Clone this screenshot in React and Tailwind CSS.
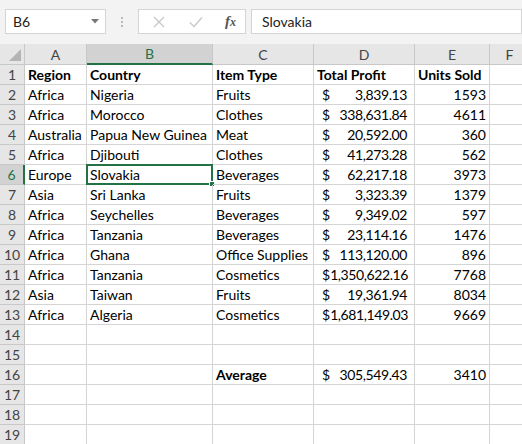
import React from "react";

const cols = [
  { key: "A", w: 62 },
  { key: "B", w: 126 },
  { key: "C", w: 101 },
  { key: "D", w: 101 },
  { key: "E", w: 75 },
  { key: "F", w: 40 },
];

const data = [
  ["Africa", "Nigeria", "Fruits", "3,839.13", "1593"],
  ["Africa", "Morocco", "Clothes", "338,631.84", "4611"],
  ["Australia", "Papua New Guinea", "Meat", "20,592.00", "360"],
  ["Africa", "Djibouti", "Clothes", "41,273.28", "562"],
  ["Europe", "Slovakia", "Beverages", "62,217.18", "3973"],
  ["Asia", "Sri Lanka", "Fruits", "3,323.39", "1379"],
  ["Africa", "Seychelles", "Beverages", "9,349.02", "597"],
  ["Africa", "Tanzania", "Beverages", "23,114.16", "1476"],
  ["Africa", "Ghana", "Office Supplies", "113,120.00", "896"],
  ["Africa", "Tanzania", "Cosmetics", "1,350,622.16", "7768"],
  ["Asia", "Taiwan", "Fruits", "19,361.94", "8034"],
  ["Africa", "Algeria", "Cosmetics", "1,681,149.03", "9669"],
];

function buildRows() {
  const rows = [];
  rows.push({ cells: ["Region", "Country", "Item Type", null, "Units Sold"], bold: true, header: true });
  data.forEach((d) => rows.push({ cells: d }));
  rows.push({ cells: [] });
  rows.push({ cells: [] });
  rows.push({ cells: ["", "", "Average", "305,549.43", "3410"], avg: true });
  rows.push({ cells: [] });
  rows.push({ cells: [] });
  rows.push({ cells: [] });
  return rows;
}

function Cell({ row, col, rowIdx }) {
  const base = "h-[20px] border-r border-b border-[#d4d4d4] flex items-center overflow-visible whitespace-nowrap";
  const selected = rowIdx === 6 && col === 1;
  const v = row.cells[col];
  let content = null;

  if (row.header && col === 3) {
    content = <span className="pl-[3px] font-bold">Total Profit</span>;
  } else if (col === 3 && v) {
    content = (
      <div className="flex w-full justify-between pl-[8px] pr-[7px]">
        <span>$</span>
        <span className="tracking-[-0.4px]">{v}</span>
      </div>
    );
  } else if (col === 4 && v) {
    content = (
      <span className={"w-full pr-[3px] " + (row.bold ? "pl-[3px] text-left font-bold" : "text-right")}>{v}</span>
    );
  } else if (v) {
    content = <span className={"pl-[3px] " + (row.bold || (row.avg && col === 2) ? "font-bold" : "")}>{v}</span>;
  }

  return (
    <div className={base + " relative"}>
      {content}
      {selected && (
        <div className="absolute left-[-1px] top-[-1px] right-[-1px] bottom-[-1px] border-2 border-[#217346] pointer-events-none">
          <div className="absolute right-[-4px] bottom-[-4px] w-[6px] h-[6px] bg-[#217346] border border-white" />
        </div>
      )}
    </div>
  );
}

export default function App() {
  const rows = buildRows();
  const template = "25px " + cols.map((c) => c.w + "px").join(" ");

  return (
    <div
      className="w-[522px] h-[444px] overflow-hidden bg-white text-[14px] text-black"
      style={{ fontFamily: "Lato, 'Open Sans', sans-serif" }}
    >
      {/* formula bar */}
      <div className="h-[44px] bg-[#f3f3f3] flex items-start pt-[9px] pl-[5px]">
        <div className="w-[101px] h-[25px] bg-white border border-[#d4d4d4] flex items-center justify-between pl-[7px] pr-[6px] text-[14px] text-[#222]">
          <span>B6</span>
          <svg width="8" height="5" viewBox="0 0 8 5"><path d="M0 0h8L4 4.5z" fill="#777" /></svg>
        </div>
        <div className="w-[32px] h-[25px] flex flex-col items-center justify-center gap-[2px]">
          <div className="w-[2px] h-[2px] bg-[#b8b8b8]" />
          <div className="w-[2px] h-[2px] bg-[#b8b8b8]" />
          <div className="w-[2px] h-[2px] bg-[#b8b8b8]" />
        </div>
        <div className="w-[108px] h-[25px] bg-white border border-[#d4d4d4] flex items-center pl-[14px]">
          <svg width="12" height="12" viewBox="0 0 12 12">
            <path d="M1 1L11 11M11 1L1 11" stroke="#c8c8c8" strokeWidth="1.4" />
          </svg>
          <svg className="ml-[24px]" width="14" height="12" viewBox="0 0 14 12">
            <path d="M1 6.5L5 10.5L13 1.5" stroke="#c8c8c8" strokeWidth="1.4" fill="none" />
          </svg>
          <span
            className="ml-[22px] text-[15px] italic font-bold text-[#555]"
            style={{ fontFamily: "'Liberation Serif', serif" }}
          >
            f<span className="text-[12px]">x</span>
          </span>
        </div>
        <div className="ml-[5px] flex-1 h-[25px] bg-white border border-[#d4d4d4] flex items-center pl-[10px] text-[14px] text-[#222]">
          Slovakia
        </div>
      </div>

      {/* grid */}
      <div className="grid" style={{ gridTemplateColumns: template }}>
        {/* column headers */}
        <div className="h-[21px] bg-[#e6e6e6] border-r border-b border-[#c8c8c8] relative overflow-hidden">
          <svg className="absolute right-[3px] bottom-[3px]" width="12" height="12" viewBox="0 0 12 12">
            <path d="M12 0V12H0z" fill="#b4b4b4" />
          </svg>
        </div>
        {cols.map((c, i) => (
          <div
            key={c.key}
            className={
              "h-[21px] flex items-center justify-center text-[14px] border-r border-[#c8c8c8] " +
              (i === 1
                ? "bg-[#d2d2d2] text-[#217346] border-b-2 border-b-[#217346]"
                : "bg-[#e6e6e6] text-[#444] border-b border-b-[#c8c8c8]")
            }
          >
            {c.key}
          </div>
        ))}

        {rows.map((row, r) => (
          <React.Fragment key={r}>
            <div
              className={
                "h-[20px] flex items-center justify-center text-[14px] border-b " +
                (r === 5
                  ? "bg-[#d2d2d2] text-[#217346] border-r-2 border-r-[#217346] border-b-[#c8c8c8]"
                  : "bg-[#e6e6e6] text-[#444] border-r border-r-[#c8c8c8] border-b-[#c8c8c8]")
              }
            >
              {r + 1}
            </div>
            {cols.map((c, ci) => (
              <Cell key={c.key} row={row} col={ci} rowIdx={r + 1} />
            ))}
          </React.Fragment>
        ))}
      </div>
    </div>
  );
}
